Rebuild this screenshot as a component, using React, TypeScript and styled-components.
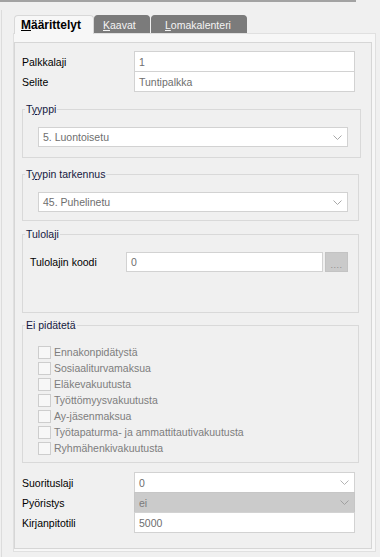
import React from "react";
import styled, { createGlobalStyle } from "styled-components";

const Global = createGlobalStyle`
  html, body { margin: 0; padding: 0; background: #f0f0f0; }
  body { font-family: "Liberation Sans", Arial, sans-serif; font-size: 10.5px; color: #000; }
  * { box-sizing: border-box; }
`;

const Window = styled.div`
  width: 380px;
  height: 557px;
  background: #f0f0f0;
  overflow: hidden;
  display: flex;
  flex-direction: column;
`;

const TopLine = styled.div`
  flex: none;
  width: 356px;
  height: 2px;
  background: #a3a3a3;
`;

const Body = styled.div`
  flex: 1;
  margin: 8px 0 0 1px;
  border-left: 1px solid #dcdcdc;
  padding: 5px 4px 5px 11px;
  display: flex;
  flex-direction: column;
`;

const TabStrip = styled.div`
  display: flex;
  padding-left: 1px;
  height: 18px;
  position: relative;
  z-index: 1;
`;

const Tab = styled.div<{ $active?: boolean; $w: number; $pl: number }>`
  width: ${(p) => p.$w}px;
  height: ${(p) => (p.$active ? 19 : 18)}px;
  padding-left: ${(p) => p.$pl}px;
  display: flex;
  align-items: center;
  border-radius: 4px 4px 0 0;
  font-size: ${(p) => (p.$active ? 12 : 10.5)}px;
  font-weight: ${(p) => (p.$active ? 700 : 400)};
  color: ${(p) => (p.$active ? "#000" : "#f4f4f4")};
  background: ${(p) => (p.$active ? "#f7f7f7" : "#7b7b7b")};
  border: 1px solid ${(p) => (p.$active ? "#d8d8d8" : "#7b7b7b")};
  border-bottom: none;
  margin-right: ${(p) => (p.$active ? 0 : 1)}px;
  u { text-decoration-thickness: 1px; text-underline-offset: 1px; }
`;

const Page = styled.div`
  flex: 1;
  display: flex;
  flex-direction: column;
  border: 1px solid #e0e0e0;
  background: #f7f7f7;
  padding: 8px 3px 2px 0;
`;

const Inner = styled.div`
  flex: 1;
  display: flex;
  flex-direction: column;
  border: 1px solid #d6d6d6;
  background: #f0f0f0;
  padding: 8px 0 0 7px;
`;

const FieldGrid = styled.div<{ $mt?: number }>`
  display: grid;
  grid-template-columns: 112px 221px;
  margin-top: ${(p) => p.$mt ?? 0}px;
`;

const Label = styled.div<{ $first?: boolean }>`
  display: flex;
  align-items: center;
  height: 21px;
  margin-top: ${(p) => (p.$first ? 0 : -1)}px;
  color: #000;
`;

const Field = styled.div<{ $first?: boolean; $disabled?: boolean; $w?: number }>`
  height: 21px;
  ${(p) => (p.$w ? `width: ${p.$w}px;` : "")}
  margin-top: ${(p) => (p.$first ? 0 : -1)}px;
  border: 1px solid ${(p) => (p.$disabled ? "#c6c6c6" : "#d2d2d2")};
  background: ${(p) => (p.$disabled ? "#cbcbcb" : "#ffffff")};
  color: ${(p) => (p.$disabled ? "#7a7a7a" : "#6e6e6e")};
  display: flex;
  align-items: center;
  justify-content: space-between;
  padding: 0 5px 0 4px;
`;

const GroupBox = styled.div<{ $mt: number; $mr: number; $pb: number }>`
  margin: ${(p) => p.$mt}px ${(p) => p.$mr}px 0 0;
  border: 1px solid #d9d9d9;
  padding: 0 0 ${(p) => p.$pb}px 15px;
  display: flex;
  flex-direction: column;
`;

const Legend = styled.div`
  align-self: flex-start;
  margin: -8px 0 0 -13px;
  padding: 0 1px;
  line-height: 14px;
  background: #f0f0f0;
  color: #14183f;
  u { text-decoration-thickness: 1px; }
`;

const GroupBody = styled.div<{ $mt: number }>`
  margin-top: ${(p) => p.$mt}px;
`;

const SelectBox = styled(Field)`
  width: 310px;
  height: 20px;
`;

const CodeRow = styled.div`
  display: flex;
  align-items: center;
  margin-left: -8px;
`;

const CodeLabel = styled.div`
  width: 96px;
  color: #000;
`;

const DotsButton = styled.div`
  width: 23px;
  height: 20px;
  margin-left: 2px;
  background: #cacaca;
  border: 1px solid #c3c3c3;
  display: flex;
  align-items: flex-end;
  justify-content: center;
  color: #8c8c8c;
  font-size: 9px;
  line-height: 11px;
  letter-spacing: 0.5px;
`;

const CheckList = styled.div`
  display: flex;
  flex-direction: column;
`;

const CheckRow = styled.div`
  display: flex;
  align-items: center;
  height: 16px;
  color: #7d7d7d;
`;

const Box = styled.span`
  width: 13px;
  height: 13px;
  border: 1px solid #cdcdcd;
  background: #f7f7f7;
  margin-right: 3px;
  flex: none;
`;

const Chevron = ({ color = "#a8a8a8" }: { color?: string }) => (
  <svg width="9" height="5" viewBox="0 0 9 5" style={{ flex: "none" }}>
    <polyline points="0.5,0.5 4.5,4.5 8.5,0.5" fill="none" stroke={color} strokeWidth="1" />
  </svg>
);

const checks = [
  "Ennakonpidätystä",
  "Sosiaaliturvamaksua",
  "Eläkevakuutusta",
  "Työttömyysvakuutusta",
  "Ay-jäsenmaksua",
  "Työtapaturma- ja ammattitautivakuutusta",
  "Ryhmähenkivakuutusta",
];

export default function App() {
  return (
    <>
      <Global />
      <Window>
        <TopLine />
        <Body>
          <TabStrip>
            <Tab $active $w={80} $pl={6}>
              <span>
                <u>M</u>äärittelyt
              </span>
            </Tab>
            <Tab $w={56} $pl={8}>
              <span>
                <u>K</u>aavat
              </span>
            </Tab>
            <Tab $w={96} $pl={13}>
              <span>
                <u>L</u>omakalenteri
              </span>
            </Tab>
          </TabStrip>
          <Page>
            <Inner>
              <FieldGrid>
                <Label $first>Palkkalaji</Label>
                <Field $first>1</Field>
                <Label>Selite</Label>
                <Field>Tuntipalkka</Field>
              </FieldGrid>

              <GroupBox $mt={17} $mr={10} $pb={10}>
                <Legend>
                  T<u>y</u>yppi
                </Legend>
                <GroupBody $mt={11}>
                  <SelectBox $first>
                    <span>5. Luontoisetu</span>
                    <Chevron />
                  </SelectBox>
                </GroupBody>
              </GroupBox>

              <GroupBox $mt={16} $mr={12} $pb={8}>
                <Legend>
                  T<u>y</u>ypin tarkennus
                </Legend>
                <GroupBody $mt={11}>
                  <SelectBox $first>
                    <span>45. Puhelinetu</span>
                    <Chevron />
                  </SelectBox>
                </GroupBody>
              </GroupBox>

              <GroupBox $mt={13} $mr={12} $pb={40}>
                <Legend>Tulolaji</Legend>
                <GroupBody $mt={11}>
                  <CodeRow>
                    <CodeLabel>Tulolajin koodi</CodeLabel>
                    <Field $first $w={197} style={{ height: 20 }}>
                      0
                    </Field>
                    <DotsButton>....</DotsButton>
                  </CodeRow>
                </GroupBody>
              </GroupBox>

              <GroupBox $mt={12} $mr={12} $pb={6}>
                <Legend>Ei pidätetä</Legend>
                <GroupBody $mt={12}>
                  <CheckList>
                    {checks.map((c) => (
                      <CheckRow key={c}>
                        <Box />
                        {c}
                      </CheckRow>
                    ))}
                  </CheckList>
                </GroupBody>
              </GroupBox>

              <FieldGrid $mt={9}>
                <Label $first>Suorituslaji</Label>
                <Field $first>
                  <span>0</span>
                  <Chevron color="#b4b4b4" />
                </Field>
                <Label>Pyöristys</Label>
                <Field $disabled>
                  <span>ei</span>
                  <Chevron color="#a0a0a0" />
                </Field>
                <Label>Kirjanpitotili</Label>
                <Field>5000</Field>
              </FieldGrid>
            </Inner>
          </Page>
        </Body>
      </Window>
    </>
  );
}
